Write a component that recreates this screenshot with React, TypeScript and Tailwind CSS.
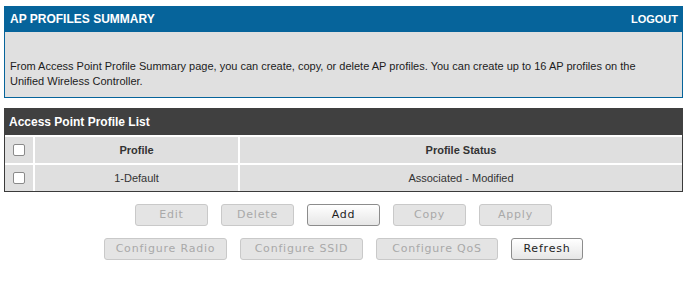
import { FC } from 'react';

const arial = { fontFamily: '"Liberation Sans", Arial, sans-serif' };

interface BtnProps {
  label: string;
  width: string;
  disabled?: boolean;
}

const Btn: FC<BtnProps> = ({ label, width, disabled }) => (
  <button
    className={
      disabled
        ? `${width} h-[22px] rounded-[3px] border border-[#c9c9c9] bg-[#e4e4e4] text-[11px] tracking-[0.8px] text-[#a9a9a9] font-['DejaVu_Sans',sans-serif]`
        : `${width} h-[22px] rounded-[3px] border border-[#8c8c8c] bg-gradient-to-b from-white to-[#e6e6e6] text-[11px] tracking-[0.8px] text-[#1e1e1e] font-['DejaVu_Sans',sans-serif]`
    }
  >
    {label}
  </button>
);

const Checkbox = () => (
  <span className="block w-[12px] h-[12px] rounded-[2px] border border-[#8a8a8a] bg-white" />
);

export default function App() {
  return (
    <div className="bg-white w-[687px] h-[284px] pt-[6px] pl-[4px]" style={arial}>
      <div className="w-[679px]">
        {/* summary */}
        <div className="h-[26px] bg-[#06649b] flex items-center justify-between pl-[6px] pr-[5px] text-white font-bold">
          <span className="text-[12px]">AP PROFILES SUMMARY</span>
          <span className="text-[11px]">LOGOUT</span>
        </div>
        <div className="h-[66px] bg-[#e0e0e0] border border-t-0 border-[#06649b] pt-[27px] pl-[5px] text-[11px] leading-[15px] text-[#1c1c1c]">
          From Access Point Profile Summary page, you can create, copy, or delete AP profiles. You can create up to 16 AP
          profiles on the
          <br />
          Unified Wireless Controller.
        </div>

        {/* profile list */}
        <div className="mt-[10px] h-[27px] bg-[#404040] flex items-center pl-[5px] text-white font-bold text-[12px]">
          Access Point Profile List
        </div>
        <div className="bg-white border border-t-0 border-[#3a3a3a] pt-[2px] grid grid-cols-[28px_203px_1fr] gap-[2px] text-[11px] text-[#333]">
          <div className="h-[26px] bg-[#dfdfdf] flex items-center justify-center">
            <Checkbox />
          </div>
          <div className="h-[26px] bg-[#dfdfdf] flex items-center justify-center font-bold">Profile</div>
          <div className="h-[26px] bg-[#dfdfdf] flex items-center justify-center font-bold">Profile Status</div>
          <div className="h-[26px] bg-[#dfdfdf] flex items-center justify-center">
            <Checkbox />
          </div>
          <div className="h-[26px] bg-[#dfdfdf] flex items-center justify-center">1-Default</div>
          <div className="h-[26px] bg-[#dfdfdf] flex items-center justify-center">Associated - Modified</div>
        </div>

        {/* actions */}
        <div className="mt-[12px] flex justify-center gap-[13px]">
          <Btn label="Edit" width="w-[73px]" disabled />
          <Btn label="Delete" width="w-[73px]" disabled />
          <Btn label="Add" width="w-[73px]" />
          <Btn label="Copy" width="w-[73px]" disabled />
          <Btn label="Apply" width="w-[73px]" disabled />
        </div>
        <div className="mt-[12px] flex justify-center gap-[13px]">
          <Btn label="Configure Radio" width="w-[123px]" disabled />
          <Btn label="Configure SSID" width="w-[123px]" disabled />
          <Btn label="Configure QoS" width="w-[122px]" disabled />
          <Btn label="Refresh" width="w-[72px]" />
        </div>
      </div>
    </div>
  );
}
